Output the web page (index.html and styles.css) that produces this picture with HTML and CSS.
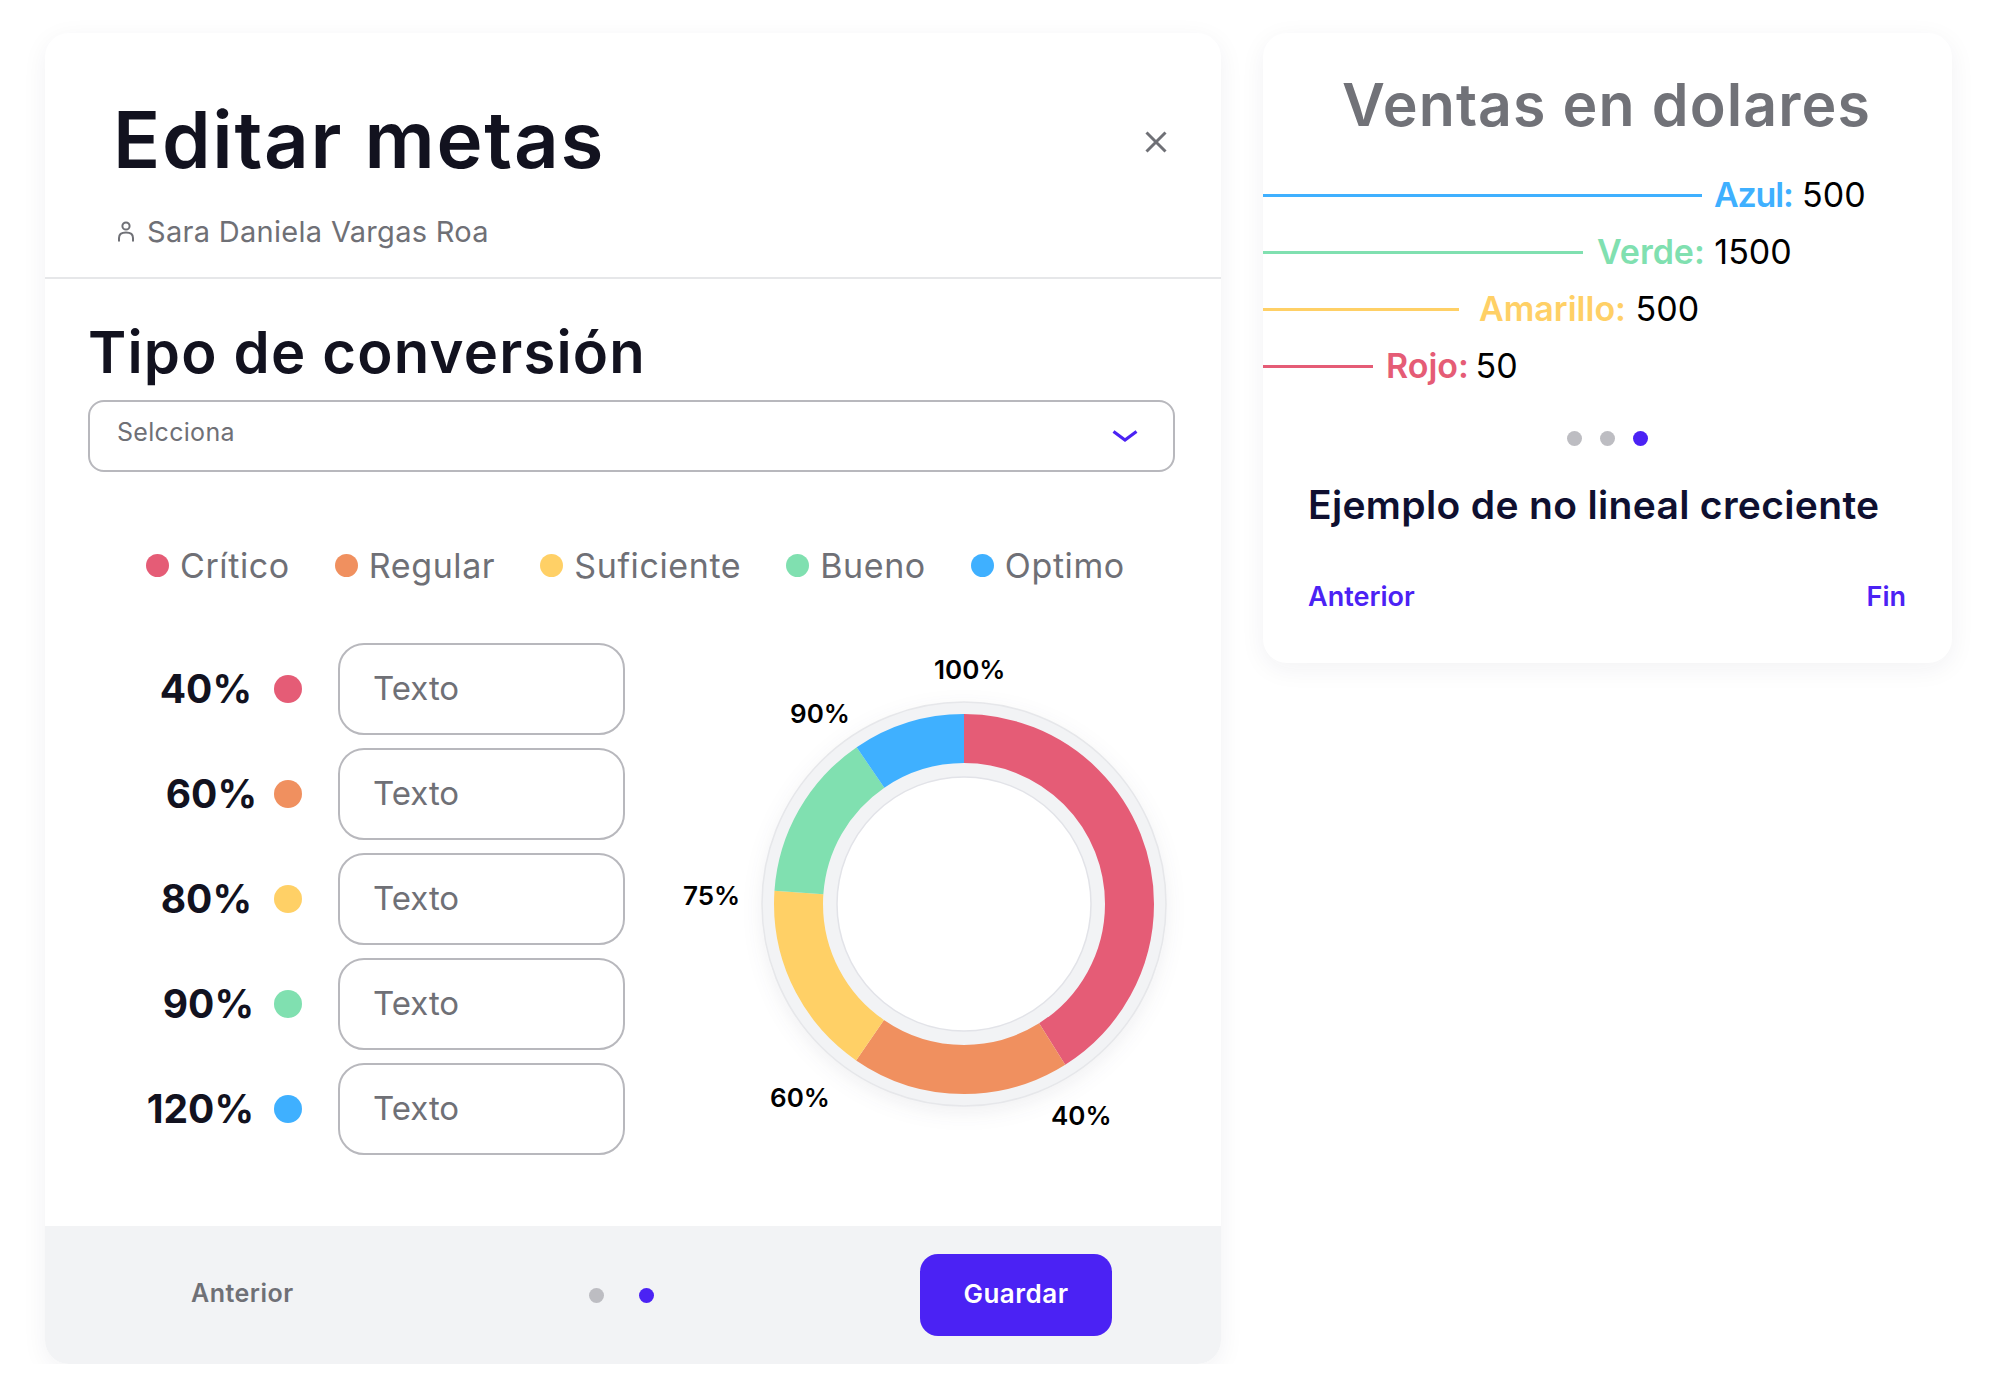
FILE: index.html
```html
<!DOCTYPE html>
<html lang="es">
<head>
    <meta charset="UTF-8">
    <meta name="viewport" content="width=device-width, initial-scale=1.0">
    <title>Editar metas</title>
    <link rel="stylesheet" href="styles.css">
</head>
<body>
    <div class="page">
        <div class="card goals-card">
            <div class="card-header">
                <div class="title-row">
                    <h1>Editar metas</h1>
                    <svg class="close-icon" viewBox="0 0 22 22" width="22" height="22">
                        <path d="M1.5 1.5 L20.5 20.5 M20.5 1.5 L1.5 20.5" fill="none" stroke="#6f7076" stroke-width="3"/>
                    </svg>
                </div>
                <div class="user">
                    <svg class="user-icon" viewBox="0 0 16 21" width="16" height="21">
                        <circle cx="8" cy="5" r="3.6" fill="none" stroke="#6f7076" stroke-width="2"/>
                        <path d="M1 20.5 V17 C1 13.6 3.6 11.6 8 11.6 C12.4 11.6 15 13.6 15 17 V20.5" fill="none" stroke="#6f7076" stroke-width="2"/>
                    </svg>
                    <span>Sara Daniela Vargas Roa</span>
                </div>
            </div>

            <div class="card-body">
                <h2>Tipo de conversión</h2>
                <div class="select">
                    <span>Selcciona</span>
                    <svg viewBox="0 0 26 12" width="26" height="12">
                        <path d="M1.5 1.5 L13 10 L24.5 1.5" fill="none" stroke="#4b22f4" stroke-width="3.2"/>
                    </svg>
                </div>

                <div class="legend">
                    <div class="legend-item"><i class="dot red"></i>Crítico</div>
                    <div class="legend-item"><i class="dot orange"></i>Regular</div>
                    <div class="legend-item"><i class="dot yellow"></i>Suficiente</div>
                    <div class="legend-item"><i class="dot green"></i>Bueno</div>
                    <div class="legend-item"><i class="dot blue"></i>Optimo</div>
                </div>

                <div class="goals">
                    <div class="rows">
                        <div class="row">
                            <span class="pct pct-a">40%</span><i class="dot red"></i>
                            <div class="text-box">Texto</div>
                        </div>
                        <div class="row">
                            <span class="pct">60%</span><i class="dot orange"></i>
                            <div class="text-box">Texto</div>
                        </div>
                        <div class="row">
                            <span class="pct pct-a">80%</span><i class="dot yellow"></i>
                            <div class="text-box">Texto</div>
                        </div>
                        <div class="row">
                            <span class="pct pct-b">90%</span><i class="dot green"></i>
                            <div class="text-box">Texto</div>
                        </div>
                        <div class="row">
                            <span class="pct pct-b">120%</span><i class="dot blue"></i>
                            <div class="text-box">Texto</div>
                        </div>
                    </div>

                    <div class="chart">
                        <svg class="donut" viewBox="0 0 420 420" width="420" height="420">
                            <circle cx="210" cy="210" r="202" fill="#f2f3f5" stroke="#e6e7ea" stroke-width="1.5"/>
                            <g fill="none" stroke-width="49" transform="rotate(-90 210 210)">
                                <circle cx="210" cy="210" r="165.5" pathLength="360" stroke="#e55c76" stroke-dasharray="147.8 360"/>
                                <circle cx="210" cy="210" r="165.5" pathLength="360" stroke="#f0905f" stroke-dasharray="66.8 360" stroke-dashoffset="-147.8"/>
                                <circle cx="210" cy="210" r="165.5" pathLength="360" stroke="#ffd066" stroke-dasharray="59.4 360" stroke-dashoffset="-214.6"/>
                                <circle cx="210" cy="210" r="165.5" pathLength="360" stroke="#80e0b0" stroke-dasharray="51.6 360" stroke-dashoffset="-274"/>
                                <circle cx="210" cy="210" r="165.5" pathLength="360" stroke="#3fb0ff" stroke-dasharray="34.4 360" stroke-dashoffset="-325.6"/>
                            </g>
                            <circle cx="210" cy="210" r="127" fill="#fff" stroke="#e2e3e8" stroke-width="1.5"/>
                        </svg>
                        <span class="chart-label label-100">100%</span>
                        <span class="chart-label label-90">90%</span>
                        <span class="chart-label label-75">75%</span>
                        <span class="chart-label label-60">60%</span>
                        <span class="chart-label label-40">40%</span>
                    </div>
                </div>
            </div>

            <div class="card-footer">
                <span class="footer-back">Anterior</span>
                <div class="pager">
                    <i class="page-dot"></i>
                    <i class="page-dot active"></i>
                </div>
                <button class="save">Guardar</button>
            </div>
        </div>

        <div class="card sales-card">
            <h3>Ventas en dolares</h3>
            <div class="sales">
                <div class="sale azul"><i class="sale-line"></i><b>Azul:</b> 500</div>
                <div class="sale verde"><i class="sale-line"></i><b>Verde:</b> 1500</div>
                <div class="sale amarillo"><i class="sale-line"></i><b>Amarillo:</b> 500</div>
                <div class="sale rojo"><i class="sale-line"></i><b>Rojo:</b> 50</div>
            </div>
            <div class="pager pager-center">
                <i class="page-dot"></i>
                <i class="page-dot"></i>
                <i class="page-dot active"></i>
            </div>
            <h4>Ejemplo de no lineal creciente</h4>
            <div class="sales-nav">
                <a href="#">Anterior</a>
                <a href="#">Fin</a>
            </div>
        </div>
    </div>
</body>
</html>
```

FILE: styles.css
```css
* {
    box-sizing: border-box;
}

body {
    margin: 0;
    background: #fff;
    font-family: Inter, "Open Sans", sans-serif;
    color: #12121f;
}

h1, h2, h3, h4 {
    margin: 0;
}

.page {
    display: flex;
    align-items: flex-start;
    gap: 42px;
    padding: 33px 0 0 45px;
}

.card {
    background: #fff;
    border-radius: 24px;
    box-shadow: 0 6px 26px rgba(30, 30, 60, 0.06);
}

/* tarjeta izquierda */
.goals-card {
    display: flex;
    flex-direction: column;
    width: 1176px;
    height: 1331px;
    overflow: hidden;
}

.card-header {
    height: 246px;
    padding: 67px 54px 0 68px;
    border-bottom: 2px solid #e6e7e9;
}

.title-row {
    display: flex;
    justify-content: space-between;
    align-items: center;
}

.close-icon {
    margin-top: 3px;
}

h1 {
    font-size: 78px;
    line-height: 80px;
    font-weight: 600;
    letter-spacing: 1.7px;
}

.user {
    display: flex;
    align-items: center;
    gap: 13px;
    height: 40px;
    margin: 31px 0 0 5px;
    font-size: 29px;
    letter-spacing: 0.3px;
    color: #6f7076;
}

.card-body {
    padding: 43px 46px 0 43px;
}

h2 {
    font-size: 58px;
    line-height: 60px;
    font-weight: 600;
    letter-spacing: 1.2px;
}

.select {
    display: flex;
    justify-content: space-between;
    align-items: center;
    height: 72px;
    margin-top: 18px;
    padding: 0 35px 0 27px;
    border: 2px solid #b8b8bd;
    border-radius: 16px;
    font-size: 25px;
    letter-spacing: 0.3px;
    color: #6f7076;
}

.select span {
    padding-bottom: 8px;
}

.legend {
    display: flex;
    gap: 45px;
    height: 40px;
    margin-top: 74px;
    padding-left: 58px;
}

.legend-item {
    display: flex;
    align-items: center;
    gap: 11px;
    padding-bottom: 1px;
    font-size: 34px;
    letter-spacing: 0.6px;
    color: #6f7076;
}

.dot {
    display: block;
    flex: none;
    width: 23px;
    height: 23px;
    border-radius: 50%;
}

.red { background: #e55c76; }
.orange { background: #f0905f; }
.yellow { background: #ffd066; }
.green { background: #80e0b0; }
.blue { background: #3fb0ff; }

.goals {
    display: flex;
    margin-top: 57px;
}

.rows {
    display: flex;
    flex-direction: column;
    gap: 13px;
}

.row {
    display: flex;
    align-items: center;
}

.row .dot {
    width: 28px;
    height: 28px;
    margin-left: 17px;
}

.pct {
    width: 169px;
    padding-bottom: 2px;
    text-align: right;
    font-size: 39px;
    font-weight: 700;
}

.pct-a {
    padding-right: 5px;
}

.pct-b {
    padding-right: 3px;
}

.text-box {
    display: flex;
    align-items: center;
    width: 287px;
    height: 92px;
    margin-left: 36px;
    padding: 0 0 3px 33px;
    border: 2px solid #b8b8bd;
    border-radius: 26px;
    font-size: 33px;
    color: #6f7076;
}

.chart {
    position: relative;
    width: 490px;
    height: 512px;
    margin-left: 55px;
}

.donut {
    display: block;
    margin: 51px 0 0 74px;
    filter: drop-shadow(0 6px 10px rgba(40, 40, 70, 0.07));
}

/* etiquetas sobre el anillo */
.chart-label {
    position: absolute;
    font-size: 26px;
    line-height: 30px;
    font-weight: 600;
    color: #000;
}

.label-100 { left: 254px; top: 12px; }
.label-90 { left: 110px; top: 56px; }
.label-75 { left: 3px; top: 238px; }
.label-60 { left: 90px; top: 440px; }
.label-40 { left: 371px; top: 458px; }

.card-footer {
    display: flex;
    align-items: center;
    height: 138px;
    margin-top: auto;
    padding: 0 109px 0 146px;
    background: #f2f3f5;
}

.footer-back {
    width: 102px;
    margin-bottom: 4px;
    font-size: 25px;
    letter-spacing: 0.5px;
    font-weight: 600;
    color: #6f7076;
}

.pager {
    display: flex;
    gap: 35px;
    margin-left: 296px;
}

.page-dot {
    display: block;
    width: 15px;
    height: 15px;
    border-radius: 50%;
    background: #bdbdc2;
}

.page-dot.active {
    background: #4b22f4;
}

.save {
    width: 192px;
    height: 82px;
    margin-left: auto;
    padding-bottom: 5px;
    border: none;
    border-radius: 18px;
    background: #4b22f4;
    color: #fff;
    font-family: inherit;
    font-size: 26px;
    letter-spacing: 0.5px;
    font-weight: 600;
}

/* tarjeta derecha */
.sales-card {
    width: 689px;
    height: 630px;
    padding-top: 38px;
}

h3 {
    padding-right: 2px;
    font-size: 59px;
    line-height: 68px;
    font-weight: 600;
    letter-spacing: 1.1px;
    text-align: center;
    color: #717278;
}

.sales {
    display: flex;
    flex-direction: column;
    gap: 13px;
    margin-top: 34px;
}

.sale {
    display: flex;
    align-items: center;
    height: 44px;
    padding-bottom: 2px;
    font-size: 34px;
    color: #000;
    white-space: pre;
}

.sale b {
    font-weight: 600;
}

.sale-line {
    display: block;
    height: 3px;
    margin-top: 2px;
}

.azul b { color: #3fb0ff; letter-spacing: -1.2px; }
.azul .sale-line { width: 439px; margin-right: 12px; background: #3fb0ff; }
.verde b { color: #80e0b0; }
.verde .sale-line { width: 320px; margin-right: 14px; background: #80e0b0; }
.amarillo b { color: #ffd066; }
.amarillo .sale-line { width: 196px; margin-right: 20px; background: #ffd066; }
.rojo b { color: #e55c76; margin-right: -3px; }
.rojo .sale-line { width: 110px; margin-right: 13px; background: #e55c76; }

.pager-center {
    justify-content: center;
    gap: 18px;
    margin: 43px 0 0;
}

h4 {
    margin-top: 34px;
    padding: 0 45px;
    font-size: 39px;
    line-height: 50px;
    font-weight: 600;
    letter-spacing: 0.33px;
    color: #0f1030;
}

.sales-nav {
    display: flex;
    justify-content: space-between;
    margin-top: 49px;
    padding: 0 46px 0 45px;
}

.sales-nav a {
    font-size: 27px;
    line-height: 36px;
    font-weight: 600;
    text-decoration: none;
    color: #4b22f4;
}
```
